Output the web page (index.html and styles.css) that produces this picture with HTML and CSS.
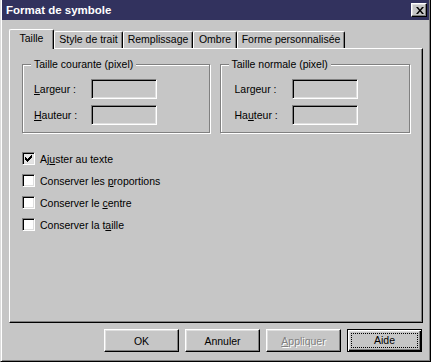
FILE: index.html
```html
<!DOCTYPE html>
<html lang="fr">
<head>
    <meta charset="UTF-8">
    <title>Format de symbole</title>
    <link rel="stylesheet" href="styles.css">
</head>
<body>
    <div class="dialog">
        <div class="titlebar">
            <span class="title">Format de symbole</span>
            <button class="close-button" aria-label="Fermer">
                <svg width="8" height="7" viewBox="0 0 8 7">
                    <path d="M0 0h2l2 2.5L6 0h2L5 3.5 8 7H6L4 4.5 2 7H0l3-3.5z" fill="#000"/>
                </svg>
            </button>
        </div>

        <div class="content">
            <div class="tabs">
                <div class="tab tab-active" style="width: 45px">Taille</div>
                <div class="tab" style="width: 69px">Style de trait</div>
                <div class="tab" style="width: 70px">Remplissage</div>
                <div class="tab" style="width: 44px">Ombre</div>
                <div class="tab" style="width: 108px">Forme personnalisée</div>
            </div>

            <div class="panel">
                <div class="groups">
                    <div class="group">
                        <span class="group-title">Taille courante (pixel)</span>
                        <div class="field">
                            <label><u>L</u>argeur :</label>
                            <span class="input"></span>
                        </div>
                        <div class="field">
                            <label><u>H</u>auteur :</label>
                            <span class="input"></span>
                        </div>
                    </div>
                    <div class="group group-right">
                        <span class="group-title">Taille normale (pixel)</span>
                        <div class="field">
                            <label>Largeur :</label>
                            <span class="input"></span>
                        </div>
                        <div class="field">
                            <label>Ha<u>u</u>teur :</label>
                            <span class="input"></span>
                        </div>
                    </div>
                </div>

                <div class="checks">
                    <div class="check">
                        <span class="box box-checked">
                            <svg width="7" height="7" viewBox="0 0 7 7">
                                <path d="M0 2h1v1h1v1h1v-1h1v-1h1v-1h1v-1h1v3h-1v1h-1v1h-1v1h-1v1h-1v-1h-1v-1h-1z" fill="#000"/>
                            </svg>
                        </span>
                        <span>Aj<u>u</u>ster au texte</span>
                    </div>
                    <div class="check">
                        <span class="box"></span>
                        <span>Conserver les <u>p</u>roportions</span>
                    </div>
                    <div class="check">
                        <span class="box"></span>
                        <span>Conserver le <u>c</u>entre</span>
                    </div>
                    <div class="check">
                        <span class="box"></span>
                        <span>Conserver la t<u>a</u>ille</span>
                    </div>
                </div>
            </div>

            <div class="buttons">
                <button class="btn">OK</button>
                <button class="btn">Annuler</button>
                <button class="btn btn-disabled"><u>A</u>ppliquer</button>
                <button class="btn btn-default"><span class="focus">Aide</span></button>
            </div>
        </div>
    </div>
</body>
</html>
```

FILE: styles.css
```css
* {
    margin: 0;
    padding: 0;
    box-sizing: border-box;
    font-family: 'Liberation Sans', Arial, sans-serif;
}

body {
    background-color: #c6c6c6;
    font-size: 10.5px;
    color: #000;
}

.dialog {
    width: 431px;
    height: 362px;
    background: #c6c6c6;
    border-style: solid;
    border-width: 0 1px 1px 1px;
    border-color: #000 #000 #000 #dcdcdc;
    box-shadow: inset 1px 0 0 #fff, inset -1px -1px 0 #808080;
    padding: 0 1px 1px 1px;
}

.titlebar {
    height: 20px;
    background: #32325e;
    display: flex;
    align-items: center;
    justify-content: space-between;
    padding: 0 2px 0 4px;
}

.title {
    color: #fff;
    font-weight: bold;
    font-size: 11.5px;
}

.close-button {
    width: 16px;
    height: 14px;
    background: #c6c6c6;
    border: 1px solid;
    border-color: #fff #000 #000 #fff;
    box-shadow: inset -1px -1px 0 #808080, inset 1px 1px 0 #dfdfdf;
    display: flex;
    align-items: center;
    justify-content: center;
    padding-left: 1px;
}

.content {
    padding: 9px 6px 0 7px;
}

.tabs {
    display: flex;
    align-items: flex-end;
    height: 19px;
    position: relative;
    z-index: 1;
}

.tab {
    height: 17px;
    border-left: 1px solid #fff;
    border-top: 1px solid #fff;
    border-right: 1px solid #000;
    border-radius: 2px 2px 0 0;
    box-shadow: inset -1px 0 0 #808080;
    background: #c6c6c6;
    text-align: center;
    line-height: 15px;
    white-space: nowrap;
}

.tab-active {
    height: 20px;
    margin-bottom: -1px;
    line-height: 17px;
}

.panel {
    height: 275px;
    border: 1px solid;
    border-color: #fff #000 #000 #fff;
    box-shadow: inset -1px -1px 0 #808080;
    padding: 15px 12px 0 12px;
}

.groups {
    display: flex;
    gap: 10px;
}

.group {
    position: relative;
    flex: 1;
    height: 69px;
    border: 1px solid #808080;
    box-shadow: inset 1px 1px 0 #fff, 1px 1px 0 #fff;
    padding: 14px 0 0 11px;
    display: flex;
    flex-direction: column;
    gap: 6px;
}

.group-right {
    padding-left: 14px;
}

.group-title {
    position: absolute;
    top: -7px;
    left: 8px;
    padding: 0 3px;
    background: #c6c6c6;
    line-height: 12px;
}

.field {
    display: flex;
    align-items: center;
    height: 20px;
}

.field label {
    width: 57px;
}

.input {
    width: 66px;
    height: 20px;
    border: 1px solid;
    border-color: #808080 #fff #fff #808080;
    box-shadow: inset 1px 1px 0 #000, inset -1px -1px 0 #dfdfdf;
}

.checks {
    margin-top: 19px;
    display: flex;
    flex-direction: column;
    gap: 9px;
}

.check {
    display: flex;
    align-items: center;
    gap: 5px;
    height: 13px;
}

.box {
    width: 13px;
    height: 13px;
    background: #fff;
    border: 1px solid;
    border-color: #808080 #fff #fff #808080;
    box-shadow: inset 1px 1px 0 #000, inset -1px -1px 0 #dfdfdf;
    display: flex;
    align-items: center;
    justify-content: center;
}

.box-checked {
    background: #e4e4e4;
}

.buttons {
    display: flex;
    justify-content: flex-end;
    gap: 6px;
    margin-top: 6px;
    padding-right: 1px;
}

.btn {
    width: 75px;
    height: 23px;
    background: #c6c6c6;
    border: 1px solid;
    border-color: #fff #000 #000 #fff;
    box-shadow: inset -1px -1px 0 #808080, inset 1px 1px 0 #dfdfdf;
    font-size: 10.5px;
    color: #000;
}

.btn-disabled {
    color: #808080;
    text-shadow: 1px 1px 0 #fff;
}

.btn-default {
    border: 1px solid #000;
    box-shadow: inset 1px 1px 0 #fff, inset -1px -1px 0 #000, inset -2px -2px 0 #808080, inset 2px 2px 0 #dfdfdf;
    padding: 3px;
}

.focus {
    display: block;
    height: 100%;
    border: 1px dotted #000;
    line-height: 13px;
}
```
